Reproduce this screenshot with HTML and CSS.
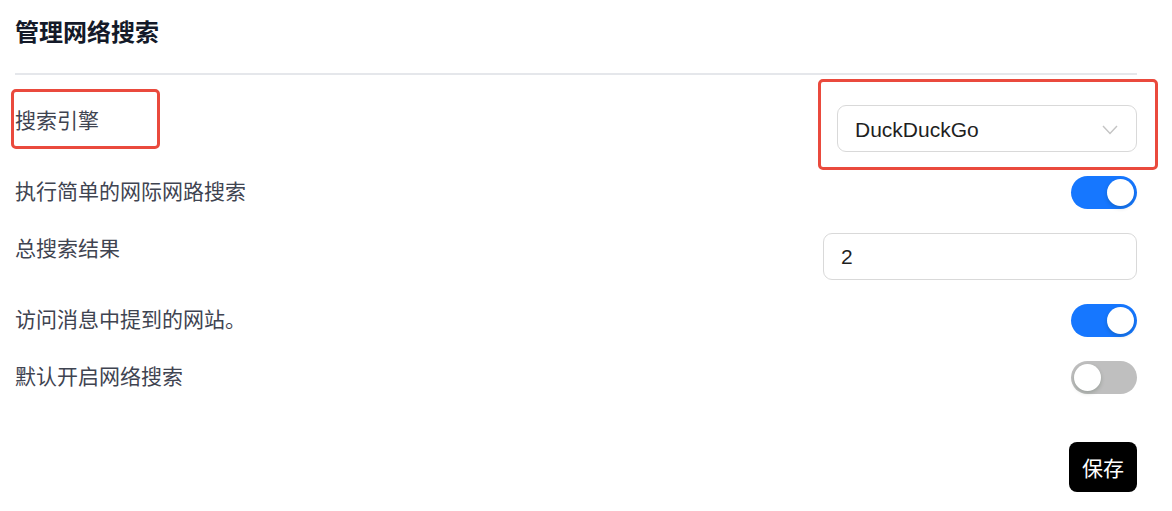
FILE: index.html
```html
<!DOCTYPE html>
<html lang="zh-CN">
<head>
  <meta charset="UTF-8">
  <title>管理网络搜索</title>
  <link rel="stylesheet" href="styles.css">
</head>
<body>
  <div class="panel">
    <h2 class="title">管理网络搜索</h2>
    <hr class="divider">

    <div class="row">
      <div class="label">搜索引擎</div>
      <div class="select">
        <span>DuckDuckGo</span>
        <svg class="chevron" width="16" height="10" viewBox="0 0 16 10">
          <polyline points="1,1 8,8.5 15,1" fill="none" stroke="#c4c4c4" stroke-width="1.4"/>
        </svg>
      </div>
    </div>

    <div class="row">
      <div class="label">执行简单的网际网路搜索</div>
      <div class="switch on"><span class="knob"></span></div>
    </div>

    <div class="row">
      <div class="label">总搜索结果</div>
      <div class="input">2</div>
    </div>

    <div class="row">
      <div class="label">访问消息中提到的网站。</div>
      <div class="switch on"><span class="knob"></span></div>
    </div>

    <div class="row">
      <div class="label">默认开启网络搜索</div>
      <div class="switch"><span class="knob"></span></div>
    </div>

    <div class="actions">
      <button class="save-btn">保存</button>
    </div>
  </div>

  <!-- annotation boxes -->
  <div class="mark mark-left"></div>
  <div class="mark mark-right"></div>
</body>
</html>
```
FILE: styles.css
```css
body {
  margin: 0;
  position: relative;
  background: #fff;
  font-family: "Liberation Sans", "Noto Sans CJK SC", sans-serif;
  font-size: 21px;
  color: #3f4451;
}
.panel { width: 1122px; padding: 17px 0 0 15px; }
.title {
  margin: 0; font-size: 24px; line-height: 32px;
  font-weight: bold; color: #141a29;
}
.divider {
  margin: 24px 0 0; border: none; height: 2px; background: #e5e7eb;
}
.row {
  display: flex; justify-content: space-between; align-items: flex-start;
  margin-top: 24px;
}
.row:first-of-type { margin-top: 30px; }
.label { line-height: 30px; padding-top: 1px; }

.select {
  width: 300px; height: 47px; box-sizing: border-box;
  border: 1px solid #d9d9d9; border-radius: 9px;
  display: flex; align-items: center; justify-content: space-between;
  padding: 2px 18px 0 17px; color: #1f1f1f;
}
.chevron { margin-top: 0; }
.input {
  width: 314px; height: 47px; box-sizing: border-box;
  border: 1px solid #d9d9d9; border-radius: 9px;
  display: flex; align-items: center; padding: 1px 0 0 17px; color: #1f1f1f;
}

.switch {
  width: 66px; height: 33px; border-radius: 17px;
  background: #bfbfbf; position: relative;
}
.switch.on { background: #1677ff; }
.knob {
  position: absolute; top: 3px; left: 3px;
  width: 27px; height: 27px; border-radius: 50%;
  background: #fff; box-shadow: 0 2px 4px rgba(0, 35, 11, 0.2);
}
.switch.on .knob { left: 36px; }

.actions { display: flex; justify-content: flex-end; margin-top: 48px; }
.save-btn {
  width: 68px; height: 50px; border: none; border-radius: 8px;
  background: #000; color: #fff; font-size: 21px;
  font-family: "Noto Sans CJK SC", sans-serif; cursor: pointer;
}

.mark {
  position: absolute; border: 3px solid #ea4a3d; border-radius: 5px;
  box-sizing: border-box;
}
.mark-left { left: 11px; top: 89px; width: 149px; height: 60px; }
.mark-right { left: 818px; top: 79px; width: 340px; height: 91px; }
```
